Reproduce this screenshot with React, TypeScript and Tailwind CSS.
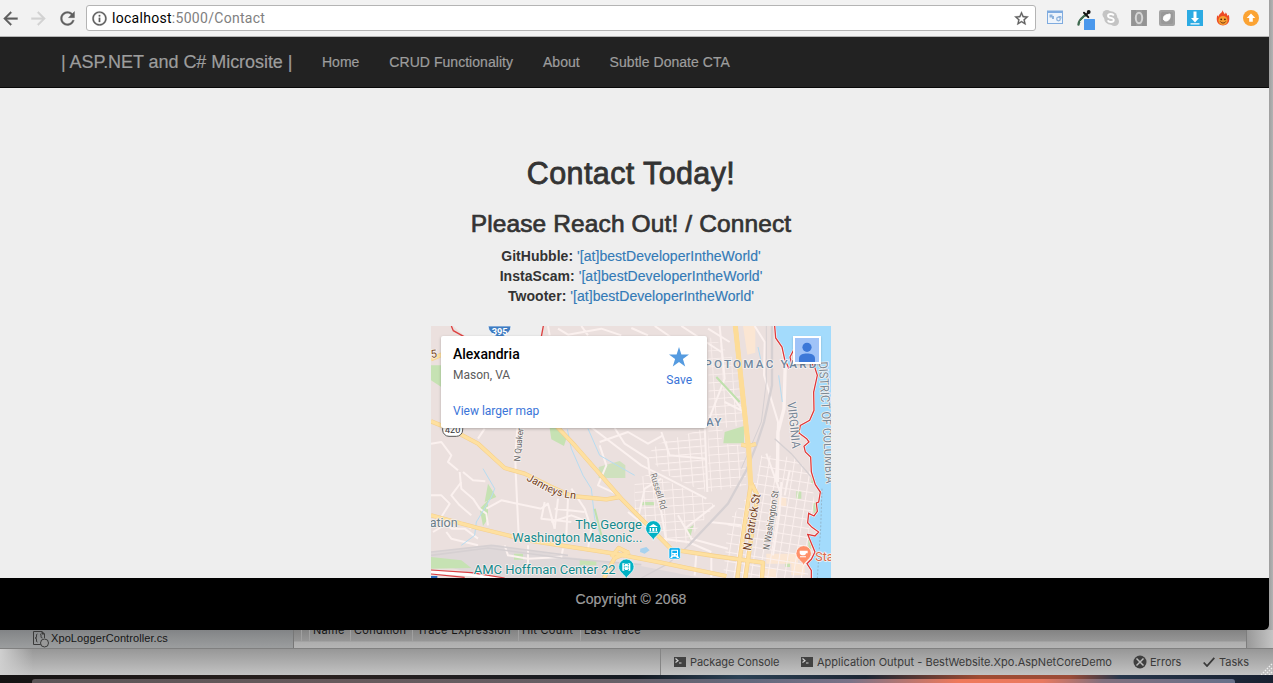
import React from "react";

const toolbarPaths = {
  back: "M20 11H7.83l5.59-5.59L12 4l-8 8 8 8 1.41-1.41L7.83 13H20v-2z",
  forward: "M12 4l-1.41 1.41L16.17 11H4v2h12.17l-5.58 5.59L12 20l8-8z",
  reload:
    "M17.65 6.35C16.2 4.9 14.21 4 12 4c-4.42 0-7.99 3.58-7.99 8s3.57 8 7.99 8c3.73 0 6.84-2.55 7.73-6h-2.08c-.82 2.33-3.04 4-5.65 4-3.31 0-6-2.69-6-6s2.69-6 6-6c1.66 0 3.14.69 4.22 1.78L13 11h7V4l-2.35 2.35z",
  info: "M11 7h2v2h-2zm0 4h2v6h-2zm1-9C6.48 2 2 6.48 2 12s4.48 10 10 10 10-4.48 10-10S17.52 2 12 2zm0 18c-4.41 0-8-3.59-8-8s3.59-8 8-8 8 3.59 8 8-3.59 8-8 8z",
  star: "M22 9.24l-7.19-.62L12 2 9.19 8.63 2 9.24l5.46 4.73L5.82 21 12 17.27 18.18 21l-1.63-7.03L22 9.24zM12 15.4l-3.76 2.27 1-4.28-3.32-2.88 4.38-.38L12 6.1l1.71 4.04 4.38.38-3.32 2.88 1 4.28L12 15.4z",
};

function Glyph({ d, className }: { d: string; className: string }) {
  return (
    <svg viewBox="0 0 24 24" className={className} fill="currentColor" stroke="currentColor" strokeWidth="0.4">
      <path d={d} />
    </svg>
  );
}

function Extensions() {
  return (
    <div className="flex items-center">
      <svg className="h-7 w-7" viewBox="0 0 28 28">
        <rect x="6.5" y="7.5" width="15" height="12" fill="#eef4fb" stroke="#7fabdf" />
        <rect x="6" y="6.500" width="16" height="2.500" fill="#7fabdf" />
        <path d="M8.500 10.500h3v1.500h1.500v3h-2v-1.500h-2.500z" fill="#8db2dc" />
        <circle cx="17.500" cy="15" r="1.800" fill="none" stroke="#8db2dc" strokeWidth="1.300" />
        <path d="M17.500 12.500h2.500v2" fill="none" stroke="#8db2dc" />
      </svg>
      <svg className="h-7 w-7" viewBox="0 0 28 28">
        <path d="M9.500 20.500c0-4 3-6 7-9.500" stroke="#3f6a50" strokeWidth="2.400" fill="none" strokeLinecap="round" />
        <path d="M11 18l5-5" stroke="#d5eedd" strokeWidth="1" />
        <path d="M15 8.800l4.300 4.300M17 11l3.200-3.200" stroke="#151515" strokeWidth="2" strokeLinecap="round" />
        <circle cx="19.700" cy="8" r="1.900" fill="#151515" />
        <rect x="15" y="15" width="11" height="11" rx="0.500" fill="#4a98ec" />
      </svg>
      <svg className="h-7 w-7" viewBox="0 0 28 28">
        <circle cx="10" cy="10.500" r="4.500" fill="#c4c4c4" />
        <circle cx="17.500" cy="17.500" r="4.500" fill="#c4c4c4" />
        <circle cx="13.800" cy="14" r="6.700" fill="#c4c4c4" />
        <path
          d="M16.800 11.500c-.7-1.200-1.700-1.500-3-1.500-1.600 0-2.800.7-2.800 1.900 0 2.700 5.800 1.300 5.800 4.100 0 1.300-1.300 2-2.900 2-1.500 0-2.700-.5-3.200-1.700"
          fill="none"
          stroke="#fff"
          strokeWidth="1.800"
        />
      </svg>
      <svg className="h-7 w-7" viewBox="0 0 28 28">
        <rect x="6" y="6" width="16" height="16" fill="#9b9b9b" />
        <path d="M8 6v16M10 6v16M18 6v16M20 6v16" stroke="#898989" strokeWidth=".8" />
        <ellipse cx="14" cy="14" rx="3.200" ry="5.200" fill="none" stroke="#d5d5d5" strokeWidth="2" />
      </svg>
      <svg className="h-7 w-7" viewBox="0 0 28 28">
        <rect x="6" y="6" width="16" height="16" rx="2" fill="#a3a3a3" />
        <rect x="8" y="8" width="12" height="12" rx="2" fill="#999" />
        <path d="M17 10c.8 4-1 7-4 7-2 0-3-1.500-2.500-3.500C11 11 14 10.500 17 10z" fill="#fff" stroke="#fff" />
      </svg>
      <svg className="h-7 w-7" viewBox="0 0 28 28">
        <rect x="6" y="6" width="16" height="16" fill="#2cabe3" />
        <path d="M12.500 7.500h3v6.500H18l-4 4.500-4-4.500h2.500zM9.500 19.200h9v1.200h-9z" fill="#fff" />
      </svg>
      <svg className="h-7 w-7" viewBox="0 0 28 28">
        <path
          d="M13.500 6c.3 1.800 1.800 2.700 2.200 4.200.8-.4 1-1.300.9-2 1.300 1.200 1.400 2.500 1.800 3.600l1.500-.8c.9 4.200.9 10-5.900 10.400C7.300 21 7.100 15 8.300 11.200c.6.500.8 1 1 1.500C10 9.700 13.300 9 13.500 6z"
          fill="#ee4b25"
        />
        <circle cx="14" cy="16.500" r="4.600" fill="#f7a032" />
        <circle cx="12.200" cy="15.300" r=".9" fill="#4a2410" />
        <circle cx="15.900" cy="15.300" r=".9" fill="#4a2410" />
        <path d="M11.300 17.500c1.300 2 4.200 2 5.500 0" stroke="#6b2d10" fill="none" />
      </svg>
      <svg className="h-7 w-7" viewBox="0 0 28 28">
        <circle cx="14" cy="14" r="8" fill="#fba333" />
        <path d="M14 9.500l4.300 4.500h-2.500v3.800h-3.600V14H9.700z" fill="#fff" />
      </svg>
    </div>
  );
}

function BrowserToolbar() {
  return (
    <div className="flex h-[37px] shrink-0 items-center border-b border-[#b5b5b5] bg-[#f2f2f2] text-[#5f5f5f]">
      <div className="flex w-[86px] gap-[7px]">
        <Glyph d={toolbarPaths.back} className="h-[21px] w-[21px]" />
        <Glyph d={toolbarPaths.forward} className="h-[21px] w-[21px] text-[#d2d2d2]" />
        <Glyph d={toolbarPaths.reload} className="ml-[1px] h-[21px] w-[21px]" />
      </div>
      <div className="flex h-[26px] w-[950px] items-center rounded-[3px] border border-[#b4b4b4] bg-white pl-[4px] pr-[5px]">
        <Glyph d={toolbarPaths.info} className="h-[17px] w-[17px]" />
        <span className="ml-[4px] flex-1 font-['Roboto',sans-serif] text-[14px] leading-5 tracking-[0.29px] text-[#808080]">
          <span className="text-black">localhost</span>:5000/Contact
        </span>
        <Glyph d={toolbarPaths.star} className="h-[17px] w-[17px]" />
      </div>
      <div className="ml-[5px]">
        <Extensions />
      </div>
    </div>
  );
}

const yellowRoads = [
  "M922 12L940 180L956 330L962 380L968 490L948 620L928 768",
  "M968 480L988 520L965 680L952 768",
  "M385 312L440 370L580 530L730 682L860 702L1005 722L1002 768",
  "M9 298L75 325L150 365L230 438L290 455L370 495L430 522L535 532L575 525",
  "M9 580L150 618L300 655L560 695L700 722L895 762",
  "M9 112L45 96",
  "M528 768L560 708L605 690M550 705L572 678L596 690L588 706",
  "M940 368L962 372L984 366",
];

const whiteRoads = [
  "M485 312L640 430L720 470L835 530",
  "M560 318L590 365L660 410L665 455L700 570L715 660",
  "M268 318L262 400L263 450L272 640",
  "M680 12L750 60L830 130",
  "M840 20L905 60M760 12L880 90",
  "M875 12L890 170L840 300M888 190L940 260M890 240L950 270",
  "M980 12L1010 60L1008 160L1050 300L1045 470",
  "M360 12L365 40M390 20L420 38L520 20L580 40M460 12L480 40M610 18L660 40",
  "M830 310L838 510M835 410L725 400L700 330",
  "M95 450L100 500L135 530L155 560L175 575L180 610",
  "M105 450L135 475L172 478M100 480L70 520L95 550L130 580",
  "M9 520L40 520L65 545L40 585L70 620L110 620L150 650",
  "M15 630L65 600L100 600L130 620M55 630L70 650L150 670",
  "M175 560L220 535L340 560M340 560L360 545L380 620",
  "M230 670L240 700L300 710L400 705L405 680M300 670L300 730",
  "M350 540L340 590L430 600M390 530L380 620M420 530L415 640M380 560L470 570M370 600L430 580L470 595",
  "M430 500L470 560L490 620L480 680",
  "M515 370L535 430L510 490L575 520M515 360L600 330L660 365L705 340",
  "M630 590L650 500L700 470M600 570L700 650L780 660L850 690",
  "M770 620L860 550M750 580L790 650L900 680M845 600L940 610",
  "M1060 480L1055 570L1035 700M1015 395L1060 520M1085 445L1070 520",
  "M9 365L40 360L70 400L60 420L90 445M150 350L170 320",
  "M800 760L805 695M850 765L850 705",
];

const shoreline =
  "M1040 12L1043 48L1062 75L1070 112L1082 138L1092 130L1086 105L1096 86L1120 90L1160 135L1168 160L1157 210L1158 265L1145 295L1117 310L1113 333L1136 350L1143 360L1128 373L1132 390L1148 405L1150 450L1162 488L1177 510L1172 540L1165 543L1168 568L1158 582L1142 574L1139 602L1152 616L1172 630L1161 642L1139 637L1150 664L1161 690L1150 712L1137 725L1150 745L1150 768";

function Pin({ x, y, color, children }: { x: number; y: number; color: string; children: React.ReactNode }) {
  return (
    <g transform={`translate(${x} ${y})`}>
      <path d="M0 36C-3 22-23 17-23-1A23 23 0 0 1 23-1C23 17 3 22 0 36z" fill={color} stroke="#fff" strokeWidth="2" />
      {children}
    </g>
  );
}

function CityMap() {
  return (
    <svg viewBox="9 12 1200 756" className="h-[252px] w-[400px]" fontFamily="Roboto, sans-serif">
      <defs>
        <pattern id="blocksA" width="34" height="21" patternUnits="userSpaceOnUse" patternTransform="rotate(-5)">
          <path d="M0 0H34M0 0V21" stroke="#fbf0ee" strokeWidth="6" />
        </pattern>
        <pattern id="blocksB" width="25" height="27" patternUnits="userSpaceOnUse" patternTransform="rotate(9)">
          <path d="M0 0H25M0 0V27" stroke="#fbf0ee" strokeWidth="6" />
        </pattern>
        <pattern id="blocksC" width="29" height="24" patternUnits="userSpaceOnUse" patternTransform="rotate(-4)">
          <path d="M0 0H29M0 0V24" stroke="#fbf0ee" strokeWidth="5.500" />
        </pattern>
      </defs>
      <rect x="9" y="12" width="1200" height="756" fill="#ebe0de" />
      <path d="M75 12H345L340 42H110z" fill="#eeeeee" />
      <path d="M9 690L200 668L420 705L620 728L820 768H180L9 720z" fill="#dfd8d9" />
      <g fill="#c6e2b3">
        <path d="M9 130H40V195L9 175z" />
        <path d="M365 318H388L415 350L408 372L370 352z" />
        <path d="M512 435L575 417L592 430V468H512z" opacity=".75" />
        <path d="M890 330L948 312V364H886z" />
        <path d="M180 485L205 525L170 540zM155 560L180 535V590L165 612z" />
        <path d="M9 705L100 715L130 738L9 740zM258 695H285V713H258zM455 712L505 716V730H455z" />
        <path d="M640 540H680V550H642zM775 625L797 608L785 650zM1105 508H1120V530H1105zM1072 714H1086V735H1072z" />
        <path d="M1150 460H1163V480L1150 485zM1155 542H1168V575H1157zM1140 645L1152 665L1143 700z" />
      </g>
      <g fill="#ffe7cf">
        <path d="M945 12H982V92L958 98z" opacity=".8" />
        <path d="M300 640H360V662H300zM1050 525H1075V553H1050zM1015 695H1110V725H1015zM1090 725H1130V760H1090zM1010 740H1045V768H1010z" opacity=".8" />
      </g>
      <path d="M692 365L830 318L835 410L830 510L710 455L655 400z" fill="url(#blocksA)" />
      <path d="M842 180L935 180L950 310L885 318L880 365L950 370L955 490L840 510z" fill="url(#blocksC)" />
      <path d="M620 470L670 455L835 530L860 550L775 665L705 655L620 575z" fill="url(#blocksC)" />
      <path d="M1000 400L1095 405L1148 450L1160 540L1140 640L1140 768H885L900 600L960 520L985 470z" fill="url(#blocksB)" />
      <path d="M838 42L870 60L925 120L935 180H842z" fill="url(#blocksC)" opacity=".7" />
      <g fill="none" stroke="#fbf1ef" strokeWidth="6" strokeLinejoin="round">
        {whiteRoads.map((d) => (
          <path key={d} d={d} />
        ))}
      </g>
      <path d="M1048 12L1072 120L1068 260L1050 330L1048 480" fill="none" stroke="#fbf1ef" strokeWidth="10" />
      <g fill="none" stroke="#d6d0d2">
        <path d="M1032 12V190L1008 300L985 370L955 445L900 545L780 672" strokeWidth="7" />
        <path d="M1015 12V180L1000 300L940 440" strokeWidth="3" />
        <path d="M780 672L720 725L640 768M1040 350L1090 395L1150 465" strokeWidth="4" />
        <path d="M9 700L180 678L400 708L640 728M9 690L190 670L420 700" strokeWidth="5" />
      </g>
      <path
        d="M418 322L430 380L465 460L490 500L500 590L520 650M480 320L515 400L620 460M165 440L200 500L190 525L145 600L140 640L100 670M1052 160L1063 240M990 75L1000 120"
        fill="none"
        stroke="#b7dcf1"
        strokeWidth="3"
      />
      <path d="M500 560L520 640L515 660M865 165L935 240" stroke="#bfe0ad" strokeWidth="6" fill="none" />
      <path d="M637 680L655 675L665 685L650 695L636 690z" fill="#a8d2ee" />
      <path d={shoreline + "L1209 768L1209 12z"} fill="#a3dbfc" />
      <path d={shoreline} fill="none" stroke="#fff" strokeWidth="7" />
      <path d={shoreline} fill="none" stroke="#de3b3b" strokeWidth="4" />
      <path d="M1182 500L1178 620L1168 768" stroke="#8ba5b5" strokeWidth="2" strokeDasharray="6 5" fill="none" />
      <g fill="none" stroke="#f5cf8c" strokeWidth="13" strokeLinejoin="round">
        {yellowRoads.map((d) => (
          <path key={d} d={d} />
        ))}
      </g>
      <g fill="none" stroke="#fee0a0" strokeWidth="9.500" strokeLinejoin="round">
        {yellowRoads.map((d) => (
          <path key={d} d={d} />
        ))}
      </g>
      <path d="M922 12L940 180L956 330L962 380L968 490" fill="none" stroke="#fddc97" strokeWidth="15" />
      <path d="M70 12L76 26L108 44M346 12L340 44" fill="none" stroke="#de4040" strokeWidth="4" />
      <path d="M9 750L130 758L220 772" fill="none" stroke="#fff" strokeWidth="9" />
      <path d="M9 744L130 752L230 768M9 756L110 766" fill="none" stroke="#db3f43" strokeWidth="3.500" />
      <path d="M9 762H28V768H9z" fill="#326fc0" />

      <path d="M180 12H249Q249 35 216 48Q182 35 180 12z" fill="#3f7cc2" stroke="#fff" strokeWidth="2" />
      <text x="191" y="38" fontSize="26" fontWeight="700" fill="#fff" textLength="48" lengthAdjust="spacingAndGlyphs">395</text>
      <rect x="44" y="300" width="60" height="43" rx="19" fill="#fff" stroke="#555" strokeWidth="3" />
      <text x="51" y="333" fontSize="27" fill="#333" textLength="46" lengthAdjust="spacingAndGlyphs">420</text>

      <g stroke="#f7f2f0" strokeWidth="5" paintOrder="stroke" strokeLinejoin="round">
        <text x="10" y="108" fontSize="33" fill="#7c4a22" transform="rotate(-8 10 108)">5</text>
        <text x="829" y="138" fontSize="35" fontWeight="500" fill="#6f87a0" textLength="336">POTOMAC YARD</text>
        <text x="834" y="311" fontSize="35" fontWeight="500" fill="#6f87a0" textLength="46">AY</text>
        <text fontSize="37" fill="#7b8a96" textLength="366" lengthAdjust="spacingAndGlyphs" transform="translate(1172 119) rotate(86.500)">DISTRICT OF COLUMBIA</text>
        <text fontSize="36" fill="#788797" textLength="140" lengthAdjust="spacingAndGlyphs" transform="translate(1078 241) rotate(84)">VIRGINIA</text>
        <text fontSize="27" fill="#666" textLength="100" lengthAdjust="spacingAndGlyphs" transform="translate(276 419) rotate(-84)">N Quaker</text>
        <text fontSize="28" fill="#777" textLength="112" lengthAdjust="spacingAndGlyphs" transform="translate(666 457) rotate(73)">Russell Rd</text>
        <text fontSize="35" fill="#744019" textLength="172" lengthAdjust="spacingAndGlyphs" transform="translate(968 687) rotate(-80)">N Patrick St</text>
        <text fontSize="28" fill="#666" textLength="180" lengthAdjust="spacingAndGlyphs" transform="translate(1024 685) rotate(-81)">N Washington St</text>
        <path id="janneys" d="M294 474L345 502Q372 516 405 526L460 533" fill="none" stroke="none" />
        <text fontSize="32" fill="#744019">
          <textPath href="#janneys" textLength="161">Janneys Ln</textPath>
        </text>
        <text x="5" y="616" fontSize="37" fill="#6c7e88" textLength="84" lengthAdjust="spacingAndGlyphs">ation</text>
        <text x="442" y="621" fontSize="39" fill="#158a8d" textLength="200" lengthAdjust="spacingAndGlyphs">The George</text>
        <text x="253" y="661" fontSize="39" fill="#158a8d" textLength="390" lengthAdjust="spacingAndGlyphs">Washington Masonic...</text>
        <text x="137" y="756" fontSize="39" fill="#158a8d" textLength="426" lengthAdjust="spacingAndGlyphs">AMC Hoffman Center 22</text>
        <text x="1162" y="716" fontSize="37" fill="#d9694b">Sta</text>
      </g>
      <Pin x={676} y={620} color="#00b1c4">
        <path d="M-14-5L0-14L14-5zM-11-2H-7V8H-11zM-3-2H3V8H-3zM7-2H11V8H7zM-14 9H14V12H-14z" fill="#fff" />
      </Pin>
      <Pin x={595} y={735} color="#00b1c4">
        <path d="M-12-11H-6V11H-12zM6-11H12V11H6zM-7-10H7V9H-7z" fill="#fff" />
        <path d="M-6-9V10M6-9V10" stroke="#00b1c4" strokeWidth="3" strokeDasharray="4 3" />
        <path d="M-3-1H3" stroke="#00b1c4" strokeWidth="2" />
      </Pin>
      <Pin x={1127} y={695} color="#ff9069">
        <path d="M-12-9H12V-1H7Q7 4 2 5H-5Q-10 5-12-1zM-11 8H7V11H-11z" fill="#fff" />
      </Pin>
      <rect x="723" y="677" width="34" height="34" rx="5" fill="#0aaff1" stroke="#fff" strokeWidth="2" />
      <path d="M730 683H750V702L754 708H747L744 704H735L732 708H726L730 702z" fill="#fff" />
      <path d="M733 686H747V693H733zM733 697H737V700H733zM743 697H747V700H743z" fill="#0aaff1" />
    </svg>
  );
}

function MapWidget() {
  return (
    <div className="relative mt-[20px] h-[252px] w-[400px] overflow-hidden font-['Roboto',sans-serif]">
      <CityMap />
      <div className="absolute left-[10px] top-[10px] flex h-[92px] w-[266px] justify-between rounded-[2px] bg-white pl-[12px] pr-[15px] shadow-[0_1px_3px_rgba(0,0,0,0.25)]">
        <div className="flex flex-col">
          <span className="mt-[9px] text-[14px] font-medium leading-[18px] text-black">Alexandria</span>
          <span className="mt-[4px] text-[12px] leading-4 tracking-[0.02px] text-[#5b5b5b]">Mason, VA</span>
          <span className="mt-[20px] text-[12px] leading-4 text-[#3a74d8]">View larger map</span>
        </div>
        <div className="flex flex-col items-center">
          <svg viewBox="0 0 20 20" className="mt-[11px] h-5 w-5">
            <path d="M10 0L12.400 7.400H20L13.900 12L16.200 19.500L10 15L3.800 19.500L6.100 12L0 7.400H7.600z" fill="#559be0" />
          </svg>
          <span className="mt-[5px] text-[12px] leading-4 text-[#3a74d8]">Save</span>
        </div>
      </div>
      <div className="absolute left-[362px] top-[10px] h-7 w-7 border-2 border-white bg-[#a0c3f8] shadow-[0_1px_2px_rgba(0,0,0,0.2)]">
        <svg viewBox="0 0 24 24" className="h-6 w-6">
          <circle cx="12" cy="9.300" r="4.600" fill="#3c78d8" />
          <path d="M4 24V20.500C4 16.500 8 15.500 12 15.500S20 16.500 20 20.500V24z" fill="#3c78d8" />
        </svg>
      </div>
    </div>
  );
}

const contacts = ["GitHubble:", "InstaScam:", "Twooter:"];

function Page() {
  return (
    <div className="flex flex-1 flex-col bg-[#eee] font-['Liberation_Sans',sans-serif] text-[14px] leading-5">
      <nav className="flex h-[51px] shrink-0 items-center border-b border-[#080808] bg-[#222] pl-[61px] text-[#9d9d9d] [-webkit-text-stroke:0.2px_#9d9d9d]">
        <span className="w-[246px] whitespace-nowrap text-[18px] tracking-[-0.05px]">| ASP.NET and C# Microsite |</span>
        <a className="px-[15px]">Home</a>
        <a className="px-[15px] tracking-[0.04px]">CRUD Functionality</a>
        <a className="px-[15px]">About</a>
        <a className="px-[15px] tracking-[0.04px]">Subtle Donate CTA</a>
      </nav>
      <main className="flex h-[490px] w-[1262px] flex-col items-center text-[#333]">
        <h1 className="mt-[69px] text-[30.5px] leading-[33px] tracking-[0.4px] [-webkit-text-stroke:0.8px_#333]">Contact Today!</h1>
        <h2 className="mt-[21px] text-[24.5px] leading-[26px] tracking-[0.12px] [-webkit-text-stroke:0.7px_#333]">
          Please Reach Out! / Connect
        </h2>
        <address className="mt-[9px] text-center not-italic tracking-[0.04px]">
          {contacts.map((name) => (
            <div key={name}>
              <strong>{name}</strong>{" "}
              <a className="text-[#337ab7] [-webkit-text-stroke:0.15px_#337ab7]">'[at]bestDeveloperIntheWorld'</a>
            </div>
          ))}
        </address>
        <MapWidget />
      </main>
      <footer className="flex h-[52px] w-full justify-center bg-black pr-[7px] pt-[11px] tracking-[0.12px] text-[#9d9d9d] [-webkit-text-stroke:0.2px_#9d9d9d]">
        Copyright © 2068
      </footer>
    </div>
  );
}

function ConsoleIcon() {
  return (
    <svg viewBox="0 0 12 10" className="h-[10px] w-3">
      <rect width="12" height="10" fill="#424242" />
      <path d="M1.500 1.500L4 3.700L1.500 5.500M5 6H7.500" stroke="#d0d0d0" strokeWidth="1.200" fill="none" />
    </svg>
  );
}

function IdePanels() {
  return (
    <div className="relative flex h-[45px] shrink-0 flex-col bg-[#aaa] font-['Inter',sans-serif] text-[#151515]">
      <div className="flex h-[18px]">
        <div className="flex w-[294px] items-start border-r border-[#777] bg-linear-to-b from-[#828486] to-[#9c9e9f] pl-[33px]">
          <svg viewBox="0 0 17 18" className="h-[18px] w-[17px]" fill="none" stroke="#3b3b3b">
            <path d="M8 14.500H.5V1.500H9L11.500 4V8" />
            <path d="M4.500 4Q3 4 3.500 6T2 8Q4 8 3.500 10T4.500 12M7 4Q8.500 4 8 6T9.500 8" />
            <path d="M9 1.500V4H11.500" fill="#3b3b3b" />
            <circle cx="11.500" cy="13" r="4" fill="#999" />
          </svg>
          <span className="ml-[1px] whitespace-nowrap font-['Liberation_Sans',sans-serif] text-[11px] leading-4 tracking-[0.09px]">
            XpoLoggerController.cs
          </span>
        </div>
        <div className="flex w-[953px] flex-col border-r border-[#7d7d7d] bg-linear-to-b from-[#a0a0a0] to-[#b4b4b4]">
          <div className="flex h-[12px] items-end overflow-hidden border-b border-[#a2a2a2] bg-linear-to-b from-[#838383] to-[#969696] pl-[7px] text-[11px] leading-[14px] tracking-[0.26px]">
            <span className="h-3 w-2 border-l border-[#a0a0a0]" />
            <span className="h-[18px] w-[41px] border-l border-[#a0a0a0] pl-[3px]">Name</span>
            <span className="h-[18px] w-[62px] border-l border-[#a0a0a0] pl-[3px]">Condition</span>
            <span className="h-[18px] w-[106px] whitespace-nowrap border-l border-[#a0a0a0] pl-[4px]">Trace Expression</span>
            <span className="h-[18px] w-[62px] whitespace-nowrap border-l border-[#a0a0a0] pl-[3px]">Hit Count</span>
            <span className="h-[18px] w-[80px] whitespace-nowrap border-l border-[#a0a0a0] pl-[3px]">Last Trace</span>
          </div>
        </div>
        <div className="flex-1 bg-linear-to-r from-[#999] to-[#c4c4c4]" />
      </div>
      <div className="flex h-[27px] items-center whitespace-nowrap border-t border-[#808080] bg-linear-to-b from-[#979797] to-[#c3c3c3] text-[11px] text-[#3a3a3a]">
        <div className="flex h-full w-full items-center">
          <div className="h-full w-[661px] border-r border-[#858585] bg-linear-to-r from-[#cfcfcf] to-transparent to-[5%]" />
          <div className="ml-[13px] flex w-[127px] items-center gap-[4px]">
            <ConsoleIcon />
            <span className="tracking-[-0.08px]">Package Console</span>
          </div>
          <div className="flex w-[332px] items-center gap-[4px]">
            <ConsoleIcon />
            <span className="tracking-[0.02px]">Application Output - BestWebsite.Xpo.AspNetCoreDemo</span>
          </div>
          <div className="flex w-[70px] items-center gap-[3px]">
            <svg viewBox="0 0 14 14" className="h-[14px] w-[14px]">
              <circle cx="7" cy="7" r="6.500" fill="#3f3f3f" />
              <path d="M3.500 3.500L10.500 10.500M10.500 3.500L3.500 10.500" stroke="#bbb" strokeWidth="1.500" />
            </svg>
            <span>Errors</span>
          </div>
          <div className="flex items-center gap-[4px]">
            <svg viewBox="0 0 12 10" className="h-[10px] w-3">
              <path d="M.7 5.500L4 9L11.300.800" stroke="#3a3a3a" strokeWidth="1.800" fill="none" />
            </svg>
            <span>Tasks</span>
          </div>
        </div>
        <svg viewBox="0 0 12 12" className="absolute bottom-0 right-0 h-3 w-3" stroke="#eee" strokeWidth="1.400" strokeDasharray="1.500 1.300">
          <path d="M0 12L12 0M4 12L12 4M8 12L12 8" />
        </svg>
      </div>
    </div>
  );
}

function Desktop() {
  return (
    <div className="flex h-[8px] shrink-0 flex-col bg-[linear-gradient(90deg,#151313_0%,#2a211f_25%,#141a22_50%,#2b4155_58%,#1d2735_68%,#a04c33_77%,#9c4c38_84%,#27374c_88%,#182030_100%)] pl-[32px] pr-[38px] pt-[4px]">
      <div className="h-1 rounded-t-[3px] bg-[linear-gradient(90deg,#5c5557_0%,#66595b_25%,#675f66_48%,#64697d_60%,#7a7388_68%,#ef795b_77%,#e87960_84%,#80707e_89%,#67708a_100%)]" />
    </div>
  );
}

export default function App() {
  return (
    <div className="flex h-[683px] w-[1273px] flex-col overflow-hidden bg-black">
      <div className="flex h-[630px] shrink-0 bg-linear-to-r from-[#999] from-[99.600%] to-[#b3b3b3]">
        <div className="flex w-[1269px] flex-col overflow-hidden rounded-br-[5px]">
          <BrowserToolbar />
          <Page />
        </div>
      </div>
      <IdePanels />
      <Desktop />
    </div>
  );
}
